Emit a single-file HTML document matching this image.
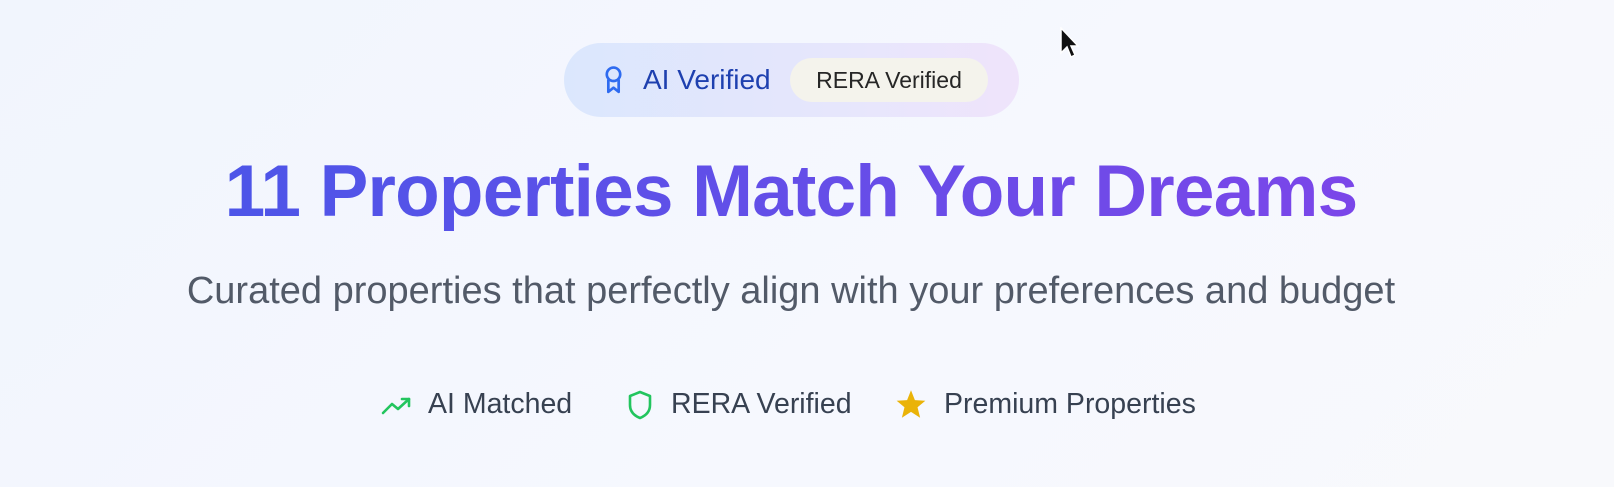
<!DOCTYPE html>
<html><head><style>
body{margin:0;width:1614px;height:487px;background:linear-gradient(135deg,#f1f5fd,#f6f8fe 60%,#f8f9fc);font-family:"Liberation Sans",sans-serif;position:relative;overflow:hidden}
.pill{position:absolute;left:564px;top:43px;width:455px;height:74px;border-radius:37px;background:linear-gradient(90deg,#dbe7fd,#e6e6fc 60%,#efe4fb)}
.pill .ai{position:absolute;left:79px;top:21px;font-size:28px;color:#1e40af}
.pill .rera{position:absolute;left:226px;top:15px;width:198px;height:44px;border-radius:22px;background:#f4f3ec;color:#262626;font-size:23px;line-height:44px;text-align:center}
h1{position:absolute;left:0;width:1582px;top:144px;margin:0;text-align:center;font-size:73px;font-weight:bold;letter-spacing:-0.8px;background:linear-gradient(90deg,#4458e8,#6a4ce8 60%,#8443ea);-webkit-background-clip:text;color:transparent;line-height:96px}
.sub{position:absolute;left:0;width:1582px;top:270px;text-align:center;font-size:38px;color:#525a68}
.row{position:absolute;top:388px;font-size:28.5px;color:#374151}
</style></head><body>
<div class="pill">
<svg style="position:absolute;left:37px;top:22px" width="25" height="31" viewBox="0 0 24 30" fill="none" stroke="#2e6bf0" stroke-width="2.6" stroke-linejoin="round"><circle cx="12" cy="9" r="6.5"/><path d="M7 14 L7 26 L12 22 L17 26 L17 14"/></svg>
<span class="ai">AI Verified</span>
<div class="rera">RERA Verified</div>
</div>
<h1>11 Properties Match Your Dreams</h1>
<div class="sub">Curated properties that perfectly align with your preferences and budget</div>
<svg style="position:absolute;left:381px;top:396px" width="32" height="20" viewBox="0 0 32 20" fill="none" stroke="#22c55e" stroke-width="2.6" stroke-linecap="round" stroke-linejoin="round"><path d="M2 17 L11 8 L17 13 L28 3"/><path d="M21 3 L28 3 L28 10"/></svg>
<div class="row" style="left:428px">AI Matched</div>
<svg style="position:absolute;left:627px;top:390px" width="26" height="30" viewBox="0 0 26 30" fill="none" stroke="#22c55e" stroke-width="2.6" stroke-linejoin="round"><path d="M13 2 L23 6 L23 15 C23 22 18 26 13 28 C8 26 3 22 3 15 L3 6 Z"/></svg>
<div class="row" style="left:671px">RERA Verified</div>
<svg style="position:absolute;left:895px;top:389px" width="32" height="30" viewBox="0 0 24 23"><path d="M12 1 L15 8.5 L23 9 L17 14 L19 22 L12 17.5 L5 22 L7 14 L1 9 L9 8.5 Z" fill="#eab308"/></svg>
<div class="row" style="left:944px">Premium Properties</div>
<svg style="position:absolute;left:1060px;top:27px" width="20" height="34" viewBox="0 0 20 34"><path d="M1 1 L1 26 L7 20 L11 30 L15 28 L11 19 L18 19 Z" fill="#111" stroke="#fff" stroke-width="1.5"/></svg>
</body></html>
